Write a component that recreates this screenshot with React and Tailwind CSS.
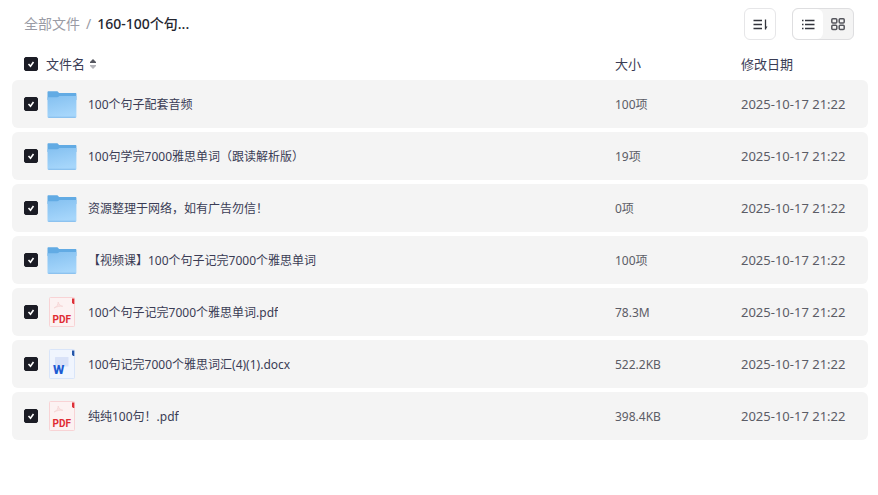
import React, { useState } from 'react'

const files = [
  { id: 1, type: 'folder', name: '100个句子配套音频', size: '100项', date: '2025-10-17 21:22' },
  { id: 2, type: 'folder', name: '100句学完7000雅思单词（跟读解析版）', size: '19项', date: '2025-10-17 21:22' },
  { id: 3, type: 'folder', name: '资源整理于网络，如有广告勿信！', size: '0项', date: '2025-10-17 21:22' },
  { id: 4, type: 'folder', name: '【视频课】100个句子记完7000个雅思单词', size: '100项', date: '2025-10-17 21:22' },
  { id: 5, type: 'pdf', name: '100个句子记完7000个雅思单词.pdf', size: '78.3M', date: '2025-10-17 21:22' },
  { id: 6, type: 'docx', name: '100句记完7000个雅思词汇(4)(1).docx', size: '522.2KB', date: '2025-10-17 21:22' },
  { id: 7, type: 'pdf', name: '纯纯100句！.pdf', size: '398.4KB', date: '2025-10-17 21:22' },
]

function FolderIcon() {
  return (
    <svg className="w-8 h-8 shrink-0" viewBox="0 0 32 32" aria-hidden="true">
      <defs>
        <linearGradient id="folder-front" x1="0" y1="0" x2="0.3" y2="1">
          <stop offset="0" stopColor="#84c0f0" />
          <stop offset="1" stopColor="#a6d6fb" />
        </linearGradient>
      </defs>
      <path d="M1.5 4.2c0-.6.4-1 1-1h8.300c.5 0 .8.1 1.100.5l1.200 1.300h16.200c.7 0 1.100.4 1.100 1V12H1.500z" fill="#62abe4" />
      <path d="M1.500 9.200h9.800c.5 0 .8-.1 1.200-.4l.6-.5c.3-.3.600-.4 1-.4h16.300v20.800c0 .6-.4 1-1 1H2.500c-.6 0-1-.4-1-1z" fill="url(#folder-front)" />
      <path d="M2.300 29.300h27.400" stroke="#74b2e8" strokeWidth="0.8" />
    </svg>
  )
}

function PdfIcon() {
  return (
    <svg className="w-8 h-8 shrink-0" viewBox="0 0 32 32" aria-hidden="true">
      <rect x="3.5" y="1.5" width="25" height="29" rx="1" fill="#fcf2f2" stroke="#f8d3d5" />
      <path d="M26 2.500h2.300v5.500h-1.200L26 6.800z" fill="#dc3038" />
      <path d="M8 12c2.500-1 4.200-3.200 4.200-6 .6 2.400 2 3.800 4.600 4.300-3-.3-5.800.2-8.800 1.700z" fill="#f9e2e2" stroke="#f5d5d6" strokeWidth="0.8" strokeLinejoin="round" />
      <text x="6.5" y="26.500" fontSize="10" fontWeight="700" fill="#e02b33" fontFamily="'Liberation Sans Narrow', Roboto, sans-serif">PDF</text>
    </svg>
  )
}

function WordIcon() {
  return (
    <svg className="w-8 h-8 shrink-0" viewBox="0 0 32 32" aria-hidden="true">
      <rect x="3.5" y="1.5" width="25" height="29" rx="1" fill="#f0f5fe" stroke="#d9e5f9" />
      <path d="M26 2.500h2.300v5.500h-1.200L26 6.800z" fill="#2456a8" />
      <rect x="9" y="9" width="13.500" height="9.500" rx="0.5" fill="#d9e2f8" />
      <text x="7" y="26" fontSize="13" fontWeight="800" fill="#1c5bd3" fontFamily="Roboto, sans-serif">W</text>
    </svg>
  )
}

function FileIcon({ type }) {
  if (type === 'pdf') return <PdfIcon />
  if (type === 'docx') return <WordIcon />
  return <FolderIcon />
}

function Checkbox({ checked, onChange, label }) {
  return (
    <label className="relative block w-3.5 h-3.5 shrink-0">
      <input
        type="checkbox"
        aria-label={label}
        checked={checked}
        onChange={onChange}
        className="peer block appearance-none w-3.5 h-3.5 rounded-[2px] border border-gray-300 bg-white checked:border-[#1b1c25] checked:bg-[#1b1c25]"
      />
      <svg className="absolute inset-0 w-3.5 h-3.5 pointer-events-none hidden peer-checked:block" viewBox="0 0 14 14" fill="none">
        <path d="M4.500 7l2 2.200 3-4.200" stroke="#fff" strokeWidth="1.6" />
      </svg>
    </label>
  )
}

export default function App() {
  const [selected, setSelected] = useState(files.map(f => f.id))
  const [view, setView] = useState('list')

  const allSelected = selected.length === files.length

  const toggleAll = () => setSelected(allSelected ? [] : files.map(f => f.id))

  const toggle = (id) => {
    setSelected(prev => prev.includes(id) ? prev.filter(x => x !== id) : [...prev, id])
  }

  return (
    <div className="bg-white min-h-screen font-['Noto_Sans','Noto_Sans_CJK_SC',sans-serif] text-[#3a3c55]">
      <header className="flex items-center justify-between h-12 px-6">
        <nav className="flex items-center gap-1.5 text-sm">
          <a href="#" className="text-[#9a9ba5]">全部文件</a>
          <span className="text-[#9a9ba5]">/</span>
          <span className="font-medium text-[#25262f]">160-100个句...</span>
        </nav>
        <div className="flex gap-4">
          <button aria-label="排序" className="flex items-center justify-center w-8 h-8 border border-[#e6e6e8] rounded-md">
            <svg className="w-4 h-4" viewBox="0 0 16 16" fill="none" stroke="#33343c" strokeWidth="1.3">
              <path d="M1.500 4.500h8.500M1.500 8.500h8.500M1.500 12.500h8.500M13.500 3.500v10" />
              <path d="M13.500 10.500h2l-2 3z" fill="#33343c" stroke="none" />
            </svg>
          </button>
          <div className="flex h-8 border border-[#dedee0] rounded-md bg-[#f4f4f4] overflow-hidden">
            <button
              aria-label="列表"
              onClick={() => setView('list')}
              className={`flex items-center justify-center w-[30px] rounded-md ${view === 'list' ? 'bg-white' : ''}`}
            >
              <svg className="w-4 h-4" viewBox="0 0 16 16" fill="none" stroke="#33343c" strokeWidth="1.3">
                <path d="M2 4.500h1.500M2 8.500h1.500M2 12.500h1.500M5 4.500h9.500M5 8.500h9.500M5 12.500h9.500" />
              </svg>
            </button>
            <button
              aria-label="网格"
              onClick={() => setView('grid')}
              className={`flex items-center justify-center w-[30px] rounded-md ${view === 'grid' ? 'bg-white' : ''}`}
            >
              <svg className="w-4 h-4" viewBox="0 0 16 16" fill="none" stroke="#55565d" strokeWidth="1.5">
                <rect x="1.8" y="2.8" width="5" height="4.2" rx="1" />
                <rect x="9.2" y="2.8" width="5" height="4.2" rx="1" />
                <rect x="1.8" y="9.300" width="5" height="4.200" rx="1" />
                <rect x="9.2" y="9.300" width="5" height="4.200" rx="1" />
              </svg>
            </button>
          </div>
        </div>
      </header>

      <main className="pl-3 pr-2.5">
        <table className="w-full table-fixed border-separate border-spacing-x-0 border-spacing-y-1 text-left">
          <colgroup>
            <col />
            <col className="w-[126px]" />
            <col className="w-[127px]" />
          </colgroup>
          <thead>
            <tr className="h-6 text-[13px] leading-5">
              <th className="p-0 pl-3 font-normal">
                <div className="flex items-center">
                  <Checkbox label="全选" checked={allSelected} onChange={toggleAll} />
                  <button className="flex items-center gap-1 ml-2">
                    文件名
                    <svg className="w-2 h-3" viewBox="0 0 8 12">
                      <path d="M4 1l3 3v1H1V4z" fill="#55565f" />
                      <path d="M4 11l3-3V7H1v1z" fill="#b4b4ba" />
                    </svg>
                  </button>
                </div>
              </th>
              <th className="p-0 font-normal">大小</th>
              <th className="p-0 font-normal">修改日期</th>
            </tr>
          </thead>
          <tbody>
            {files.map(file => (
              <tr key={file.id} className="h-12 bg-[#f4f4f4] text-xs">
                <td className="p-0 pl-3 rounded-l-md">
                  <div className="flex items-center">
                    <Checkbox label={file.name} checked={selected.includes(file.id)} onChange={() => toggle(file.id)} />
                    <div className="flex items-center gap-2.5 ml-2 min-w-0">
                      <FileIcon type={file.type} />
                      <span className="truncate pt-0.5">{file.name}</span>
                    </div>
                  </div>
                </td>
                <td className="p-0 pt-0.5 text-[#5b5c66]">{file.size}</td>
                <td className="p-0 pt-0.5 rounded-r-md text-[13px] text-[#5b5c66]">{file.date}</td>
              </tr>
            ))}
          </tbody>
        </table>
      </main>
    </div>
  )
}
